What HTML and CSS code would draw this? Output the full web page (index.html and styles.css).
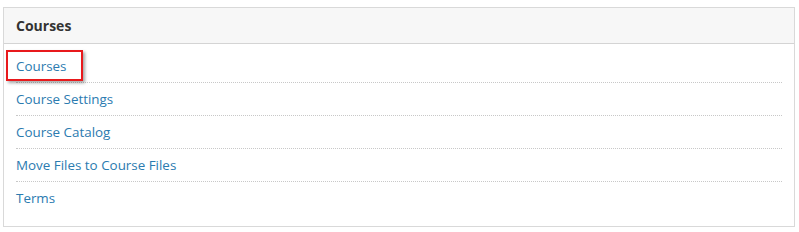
FILE: index.html
```html
<!DOCTYPE html>
<html>
<head>
<meta charset="utf-8">
<link rel="stylesheet" href="styles.css">
</head>
<body>
<div class="panel">
  <div class="panel-head">Courses</div>
  <ul class="links">
    <li class="item highlighted"><a href="#">Courses</a><span class="mark"></span></li>
    <li class="item"><a href="#">Course Settings</a></li>
    <li class="item"><a href="#">Course Catalog</a></li>
    <li class="item"><a href="#">Move Files to Course Files</a></li>
    <li class="item last"><a href="#">Terms</a></li>
  </ul>
</div>
</body>
</html>
```
FILE: styles.css
```css
html, body {
  margin: 0;
  padding: 0;
  background: #fff;
}
body {
  padding: 7px 4px 0 3px;
  font-family: "Open Sans", "Liberation Sans", sans-serif;
  font-size: 13.4px;
}
.panel {
  border: 1px solid #d9d9d9;
  height: 218px;
}
.panel-head {
  background: #f7f7f7;
  border-bottom: 1px solid #d4d4d4;
  height: 35px;
  line-height: 36px;
  padding-left: 12px;
  font-weight: bold;
  font-size: 14px;
  color: #333;
}
.links {
  list-style: none;
  margin: 0;
  padding: 6px 12px 0 12px;
}
.item {
  position: relative;
  height: 32px;
  line-height: 32px;
  border-bottom: 1px dotted #c8c8c8;
}
.item.last {
  border-bottom: none;
}
.item a {
  color: #2b7bb0;
  text-decoration: none;
}
.mark {
  position: absolute;
  left: -10px;
  top: 0;
  width: 73px;
  height: 27px;
  border: 2px solid #e8191c;
  box-shadow: 2px 2px 3px rgba(0,0,0,0.35);
}
```
